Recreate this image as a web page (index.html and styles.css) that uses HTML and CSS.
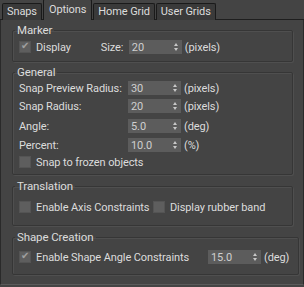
FILE: index.html
```html
<!DOCTYPE html>
<html lang="en">
<head>
    <meta charset="UTF-8">
    <title>Snaps and Grids</title>
    <link rel="stylesheet" href="styles.css">
</head>
<body>
    <div class="dialog">
        <div class="tabs">
            <div class="tab">Snaps</div>
            <div class="tab active">Options</div>
            <div class="tab">Home Grid</div>
            <div class="tab">User Grids</div>
        </div>

        <div class="panel">
            <fieldset class="group marker">
                <legend>Marker</legend>
                <div class="row">
                    <label class="check checked"><span class="box"></span>Display</label>
                    <span class="size-label">Size:</span>
                    <div class="spinner"><span>20</span><span class="arrows"></span></div>
                    <span class="unit">(pixels)</span>
                </div>
            </fieldset>

            <fieldset class="group general">
                <legend>General</legend>
                <div class="row">
                    <span class="label">Snap Preview Radius:</span>
                    <div class="spinner"><span>30</span><span class="arrows"></span></div>
                    <span class="unit">(pixels)</span>
                </div>
                <div class="row">
                    <span class="label">Snap Radius:</span>
                    <div class="spinner"><span>20</span><span class="arrows"></span></div>
                    <span class="unit">(pixels)</span>
                </div>
                <div class="row">
                    <span class="label">Angle:</span>
                    <div class="spinner"><span>5.0</span><span class="arrows"></span></div>
                    <span class="unit">(deg)</span>
                </div>
                <div class="row">
                    <span class="label">Percent:</span>
                    <div class="spinner"><span>10.0</span><span class="arrows"></span></div>
                    <span class="unit">(%)</span>
                </div>
                <div class="row">
                    <label class="check"><span class="box"></span>Snap to frozen objects</label>
                </div>
            </fieldset>

            <fieldset class="group translation">
                <legend>Translation</legend>
                <div class="row">
                    <label class="check axis"><span class="box"></span>Enable Axis Constraints</label>
                    <label class="check rubber"><span class="box"></span>Display rubber band</label>
                </div>
            </fieldset>

            <fieldset class="group shape">
                <legend>Shape Creation</legend>
                <div class="row">
                    <label class="check checked"><span class="box"></span>Enable Shape Angle Constraints</label>
                    <div class="spinner"><span>15.0</span><span class="arrows"></span></div>
                    <span class="unit">(deg)</span>
                </div>
            </fieldset>
        </div>
    </div>
</body>
</html>
```

FILE: styles.css
```css
body {
    margin: 0;
    background-color: #444444;
    font-family: Roboto, "Open Sans", sans-serif;
    font-size: 11px;
    letter-spacing: -0.1px;
    color: #dcdcdc;
}

.dialog {
    width: 304px;
    height: 285px;
    display: flex;
    flex-direction: column;
}

.tabs {
    display: flex;
    align-items: flex-end;
    height: 20px;
    padding-left: 2px;
    border-bottom: 1px solid #1e1e1e;
    box-sizing: border-box;
}

.tab {
    height: 17px;
    line-height: 16px;
    padding: 0 4px;
    background-color: #3a3a3a;
    border: 1px solid #1a1a1a;
    border-bottom: none;
    border-radius: 2px 2px 0 0;
    margin-bottom: -1px;
    margin-right: 1px;
    box-sizing: border-box;
    white-space: nowrap;
    font-size: 11px;
}

.tab.active {
    height: 21px;
    line-height: 19px;
    padding: 0 5px;
    background-color: #444444;
}

.panel {
    flex: 1;
    border-left: 1px solid #2a2a2a;
    border-right: 1px solid #2a2a2a;
    border-bottom: 1px solid #5a5a5a;
    padding: 0 10px 0 11px;
}

.group {
    margin: 3px 0 0 0;
    padding: 0 6px 4px 6px;
    border: 1px solid #363636;
    border-radius: 2px;
    box-shadow: 1px 1px 0 #4f4f4f, inset 1px 1px 0 #4f4f4f;
}

.group legend {
    padding: 0 2px;
    margin-left: -4px;
    font-size: 11.5px;
    line-height: 14px;
}

.row {
    display: flex;
    align-items: center;
    height: 18px;
    white-space: nowrap;
}

.label {
    width: 109px;
    flex-shrink: 0;
}

.check {
    display: flex;
    align-items: center;
    flex-shrink: 0;
}

.check .box {
    width: 10px;
    height: 10px;
    background-color: #5e5e5e;
    border: 1px solid #545454;
    margin-right: 5px;
    position: relative;
}

.check.checked .box::after {
    content: "\2714";
    position: absolute;
    left: 1px;
    top: -2px;
    font-size: 10px;
    color: #a0a0a0;
}

.size-label {
    margin-left: 30px;
    width: 28px;
}

.spinner {
    width: 53px;
    height: 14px;
    flex-shrink: 0;
    background-color: #5c5c5c;
    display: flex;
    align-items: center;
    justify-content: space-between;
    padding: 0 3px 0 3px;
    box-sizing: border-box;
    color: #cfcfcf;
}

.spinner .arrows {
    width: 5px;
    height: 8px;
    position: relative;
}

.spinner .arrows::before,
.spinner .arrows::after {
    content: "";
    position: absolute;
    left: 0;
    border-left: 2.5px solid transparent;
    border-right: 2.5px solid transparent;
}

.spinner .arrows::before {
    top: 0;
    border-bottom: 3px solid #c8c8c8;
}

.spinner .arrows::after {
    bottom: 0;
    border-top: 3px solid #c8c8c8;
}

.unit {
    margin-left: 3px;
}

.marker .row {
    height: 20px;
}

.general .row:nth-child(4) {
    margin-top: 2px;
}

.general .row:nth-child(5) {
    margin-top: 1px;
}

.general .row:nth-child(6) {
    height: 16px;
}

.translation {
    margin-top: 4px;
    padding-top: 2px;
    padding-bottom: 6px;
}

.translation .row {
    height: 24px;
}

.axis {
    width: 134px;
}

.shape {
    margin-top: 4px;
}

.shape .row {
    height: 26px;
}

.shape .check {
    width: 189px;
}

.shape .unit {
    margin-right: 3px;
}
```
